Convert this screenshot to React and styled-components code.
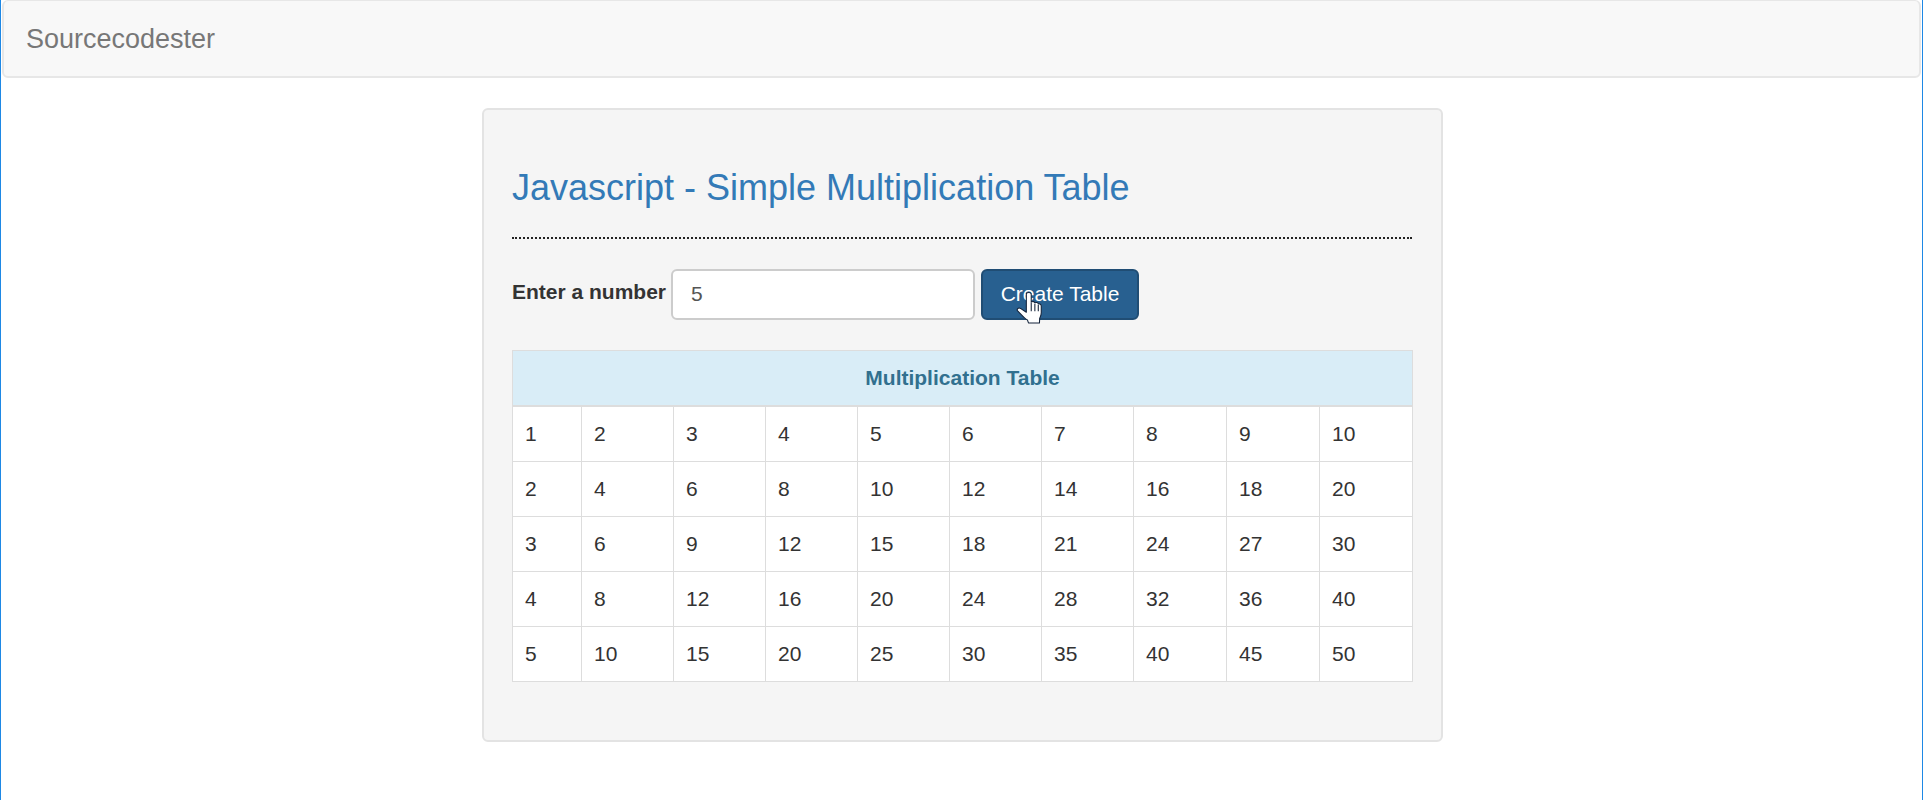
import React from 'react'
import styled, { createGlobalStyle } from 'styled-components'

const GlobalStyle = createGlobalStyle`
  * { box-sizing: border-box; }
  html, body { margin: 0; padding: 0; background: #fff; }
  body {
    font-family: "Liberation Sans", Arial, sans-serif;
    font-size: 21px;
    line-height: 1.42857;
    color: #333;
    overflow: hidden;
  }
`

const rows = [1, 2, 3, 4, 5]
const cols = [1, 2, 3, 4, 5, 6, 7, 8, 9, 10]
const colWidths = [69, 92, 92, 92, 92, 92, 92, 93, 93, 93]

const Page = styled.div`
  height: 800px;
  border-left: 1px solid #1e88e5;
  border-right: 1px solid #1e88e5;
`
const Navbar = styled.nav`
  height: 78px;
  margin: 0 1px;
  padding: 2px 22px 0;
  display: flex;
  align-items: center;
  background: #f8f8f8;
  border: 2px solid #e7e7e7;
  border-top-width: 1px;
  border-radius: 6px;
`
const Brand = styled.a`
  font-size: 27px;
  line-height: 1;
  color: #777;
`
const Well = styled.main`
  width: 961px;
  height: 634px;
  margin: 30px 0 0 481px;
  padding: 27px 29px 27px 28px;
  background: #f5f5f5;
  border: 2px solid #e3e3e3;
  border-radius: 6px;
`
const Title = styled.h3`
  margin: 31px 0 15px;
  font-size: 36px;
  font-weight: 500;
  line-height: 1.1;
  color: #337ab7;
`
const Rule = styled.hr`
  margin: 29px 0 30px;
  border: 0;
  border-top: 2px dotted #222;
`
const Form = styled.form`
  display: flex;
  align-items: center;
  margin-bottom: 30px;
`
const Label = styled.label`
  margin-right: 5px;
  padding-bottom: 4px;
  font-weight: 700;
  font-size: 21px;
`
const Input = styled.input`
  width: 304px;
  height: 51px;
  padding: 9px 18px;
  font: inherit;
  color: #555;
  background: #fff;
  border: 2px solid #ccc;
  border-radius: 6px;
`
const Button = styled.button`
  position: relative;
  width: 158px;
  height: 51px;
  margin-left: 6px;
  padding: 0;
  font: inherit;
  color: #fff;
  background: #286090;
  border: 2px solid #204d74;
  border-radius: 6px;
`
const Cursor = styled.svg`
  position: absolute;
  left: 33px;
  top: 21px;
  width: 26px;
  height: 32px;
`
const Table = styled.table`
  width: 901px;
  table-layout: fixed;
  border-collapse: collapse;
  background: #fff;
`
const HeadCell = styled.th`
  height: 56px;
  padding: 0 12px;
  font-size: 21px;
  font-weight: 700;
  text-align: center;
  color: #31708f;
  background: #d9edf7;
  border: 1px solid #ddd;
  border-bottom-width: 2px;
`
const Cell = styled.td`
  height: 55px;
  padding: 0 12px;
  font-size: 21px;
  border: 1px solid #ddd;
`

const App = () => (
  <Page>
    <GlobalStyle />
    <Navbar>
      <Brand>Sourcecodester</Brand>
    </Navbar>
    <Well>
      <Title>Javascript - Simple Multiplication Table</Title>
      <Rule />
      <Form onSubmit={e => e.preventDefault()}>
        <Label htmlFor="number">Enter a number</Label>
        <Input id="number" defaultValue="5" />
        <Button type="submit">
          Create Table
          <Cursor viewBox="0 0 24 30">
            <path d="M9.5 2.200C9.500 1 10.500.5 11.800.5s2.300.7 2.300 1.900V9.500c1.300-.9 3.100-.6 3.400.6 1.200-.7 3-.2 3.200 1.100 1.300-.4 2.800.4 2.800 1.900v6.400c0 2.200-.8 3.500-1.500 5.200l-.2 4.300H11.500l-.9-2.700C8.200 25.500 4.200 20.500 1.400 17.800.2 16.500 1.800 14.200 4 15.400L9.500 19z" fill="#fff" stroke="#14233a" strokeWidth="1" strokeLinejoin="round" />
            <path d="M14.100 10v8M17.500 11v7M20.700 12v6" fill="none" stroke="#14233a" strokeWidth="1" />
          </Cursor>
        </Button>
      </Form>
      <Table>
        <colgroup>
          {colWidths.map((w, i) => <col key={i} width={w} />)}
        </colgroup>
        <thead>
          <tr>
            <HeadCell colSpan={10}>Multiplication Table</HeadCell>
          </tr>
        </thead>
        <tbody>
          {rows.map(r => (
            <tr key={r}>
              {cols.map(c => <Cell key={c}>{r * c}</Cell>)}
            </tr>
          ))}
        </tbody>
      </Table>
    </Well>
  </Page>
)

export default App
